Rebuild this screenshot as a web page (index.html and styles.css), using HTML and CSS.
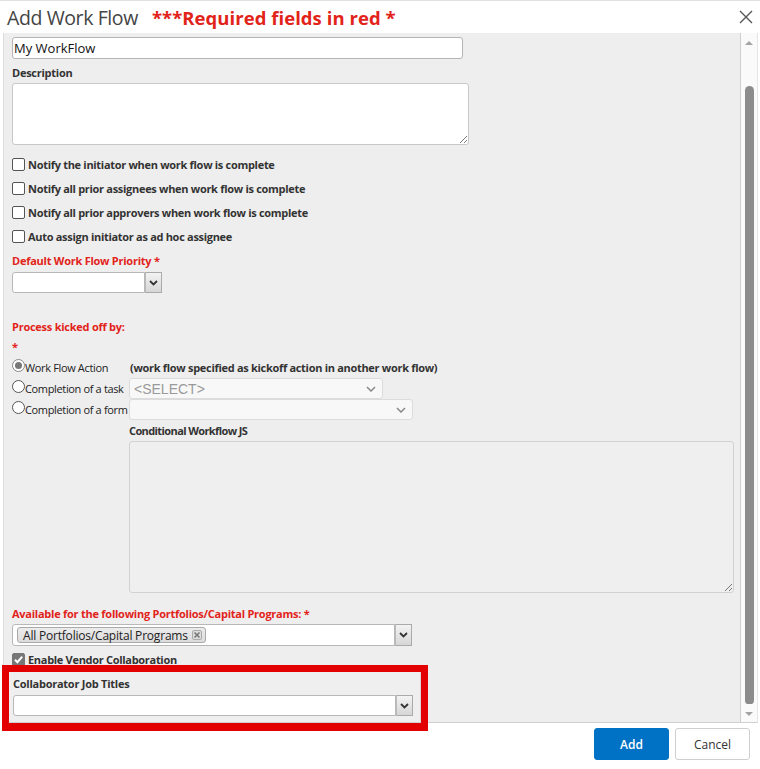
FILE: index.html
```html
<!DOCTYPE html>
<html>
<head>
<meta charset="utf-8">
<link rel="stylesheet" href="styles.css">
</head>
<body>
<div class="dialog">
  <header class="titlebar">
    <h1 class="title">Add Work Flow</h1>
    <span class="req-note">***Required fields in red *</span>
    <button class="close" aria-label="Close">
      <svg width="14" height="14" viewBox="0 0 14 14"><path d="M1 1L13 13M13 1L1 13" stroke="#555" stroke-width="1.4" fill="none"/></svg>
    </button>
  </header>

  <div class="body">
    <div class="form">
      <input class="text-input name-input" type="text" value="My WorkFlow">

      <div class="label top-label">Description</div>
      <div class="textarea desc"><span class="grip"></span></div>

      <label class="check-row"><span class="cbox"></span>Notify the initiator when work flow is complete</label>
      <label class="check-row"><span class="cbox"></span>Notify all prior assignees when work flow is complete</label>
      <label class="check-row"><span class="cbox"></span>Notify all prior approvers when work flow is complete</label>
      <label class="check-row"><span class="cbox"></span>Auto assign initiator as ad hoc assignee</label>

      <div class="label red prio-label">Default Work Flow Priority *</div>
      <div class="combo prio-combo">
        <div class="combo-field"></div>
        <div class="combo-btn"><svg width="9" height="6" viewBox="0 0 9 6"><path d="M1 1L4.5 4.5L8 1" stroke="#333" stroke-width="1.8" fill="none"/></svg></div>
      </div>

      <div class="label red process-label">Process kicked off by:</div>
      <div class="label red star-label">*</div>

      <div class="radio-row">
        <span class="radio checked"></span><span class="radio-text">Work Flow Action</span>
        <span class="note">(work flow specified as kickoff action in another work flow)</span>
      </div>
      <div class="radio-row">
        <span class="radio"></span><span class="radio-text">Completion of a task</span>
        <div class="dsel task-sel"><span class="placeholder">&lt;SELECT&gt;</span><svg width="10" height="6" viewBox="0 0 10 6"><path d="M1 1L5 5L9 1" stroke="#888" stroke-width="1.5" fill="none"/></svg></div>
      </div>
      <div class="radio-row">
        <span class="radio"></span><span class="radio-text">Completion of a form</span>
        <div class="dsel form-sel"><span class="placeholder"></span><svg width="10" height="6" viewBox="0 0 10 6"><path d="M1 1L5 5L9 1" stroke="#888" stroke-width="1.5" fill="none"/></svg></div>
      </div>

      <div class="js-block">
        <div class="label js-label">Conditional Workflow JS</div>
        <div class="textarea js-area"><span class="grip"></span></div>
      </div>

      <div class="label red avail-label">Available for the following Portfolios/Capital Programs: *</div>
      <div class="combo multi-combo">
        <div class="combo-field multi-field">
          <span class="chip">All Portfolios/Capital Programs <span class="chip-x"><svg width="8" height="8" viewBox="0 0 8 8"><path d="M1.5 1.5L6.5 6.5M6.5 1.5L1.5 6.5" stroke="#777" stroke-width="1.6"/></svg></span></span>
        </div>
        <div class="combo-btn"><svg width="9" height="6" viewBox="0 0 9 6"><path d="M1 1L4.5 4.5L8 1" stroke="#333" stroke-width="1.8" fill="none"/></svg></div>
      </div>

      <label class="check-row vendor-row"><span class="cbox checked"><svg width="11" height="11" viewBox="0 0 11 11"><path d="M2 5.8L4.4 8.2L9.2 2.6" stroke="#fff" stroke-width="2" fill="none"/></svg></span>Enable Vendor Collaboration</label>

      <div class="collab">
        <div class="label collab-label">Collaborator Job Titles</div>
        <div class="combo collab-combo">
          <div class="combo-field"></div>
          <div class="combo-btn"><svg width="9" height="6" viewBox="0 0 9 6"><path d="M1 1L4.5 4.5L8 1" stroke="#333" stroke-width="1.8" fill="none"/></svg></div>
        </div>
      </div>
    </div>

    <div class="scrollbar">
      <span class="arrow up"></span>
      <div class="thumb"></div>
      <span class="arrow down"></span>
    </div>
  </div>

  <footer class="footer">
    <button class="btn primary">Add</button>
    <button class="btn">Cancel</button>
  </footer>

  <div class="highlight"></div>
</div>
</body>
</html>
```

FILE: styles.css
```css
* { box-sizing: border-box; }
html, body { margin: 0; padding: 0; background: #fff; }
body { font-family: "Open Sans", "Noto Sans", sans-serif; color: #333; }

.dialog {
  position: relative;
  width: 760px;
  height: 769px;
  background: #fff;
  border-top: 1px solid #e2e2e2;
  display: flex;
  flex-direction: column;
  overflow: hidden;
}

.titlebar {
  height: 32px;
  display: flex;
  align-items: center;
  padding-left: 7px;
  flex: none;
}
.title {
  margin: 0;
  font-size: 19.5px;
  font-weight: 400;
  color: #444;
  letter-spacing: -0.4px;
}
.req-note {
  margin-left: 14px;
  font-size: 18.5px;
  font-weight: 700;
  color: #e2231a;
  letter-spacing: 0.05px;
}
.close {
  margin-left: auto;
  margin-right: 6px;
  border: 0;
  background: none;
  padding: 0;
  width: 16px;
  height: 16px;
  display: flex;
  align-items: center;
  justify-content: center;
}

.body {
  height: 690px;
  flex: none;
  display: flex;
  margin: 0 2px 0 3px;
  border-left: 1px solid #dcdcdc;
  border-bottom: 1px solid #d0d0d0;
  border-right: 1px solid #e6e6e6;
}
.form {
  flex: 1;
  background: #eeeeee;
  padding: 4px 0 0 8px;
  overflow: hidden;
  border-right: 1px solid #cfcfcf;
}

.label {
  font-size: 11px;
  font-weight: 700;
  line-height: 16px;
  height: 16px;
  color: #333;
  letter-spacing: -0.25px;
}
.red { color: #e2231a; }

.text-input {
  display: block;
  width: 451px;
  height: 22px;
  border: 1px solid #b5b5b5;
  border-radius: 3px;
  background: #fff;
  font-family: "Open Sans", sans-serif;
  font-size: 13px;
  color: #111;
  padding: 0 1px;
  margin: 0;
  outline: none;
}
.top-label { margin-top: 6px; }

.textarea {
  position: relative;
  background: #fff;
  border: 1px solid #c8c8c8;
  border-radius: 3px;
}
.desc { width: 457px; height: 62px; margin-top: 2px; }
.grip {
  position: absolute;
  right: 1px;
  bottom: 1px;
  width: 7px;
  height: 7px;
  background: linear-gradient(135deg, transparent 45%, #777 45%, #777 55%, transparent 55%, transparent 75%, #777 75%, #777 85%, transparent 85%);
}

.check-row {
  display: flex;
  align-items: center;
  height: 24px;
  font-size: 11px;
  font-weight: 700;
  letter-spacing: -0.3px;
  color: #333;
}
.desc + .check-row { margin-top: 7px; }
.cbox {
  width: 13px;
  height: 13px;
  border: 1px solid #555;
  border-radius: 2px;
  background: #fff;
  margin-right: 3px;
  flex: none;
  display: flex;
  align-items: center;
  justify-content: center;
}
.cbox.checked { background: #777; border-color: #777; }

.prio-label { margin-top: 5px; }

.combo { display: flex; }
.combo-field {
  height: 21px;
  background: #fff;
  border: 1px solid #b8b8b8;
  border-radius: 3px 0 0 3px;
}
.combo-btn {
  width: 17px;
  height: 21px;
  border: 1px solid #aaa;
  border-left: 1px solid #bbb;
  background: linear-gradient(#f3f3f3, #d6d6d6);
  display: flex;
  align-items: center;
  justify-content: center;
}
.prio-combo { margin-top: 3px; }
.prio-combo .combo-field { width: 133px; }

.process-label { margin-top: 26px; }
.star-label { margin-top: 4px; }

.radio-row {
  display: flex;
  align-items: center;
  height: 21px;
  font-size: 11px;
  color: #222;
}
.star-label + .radio-row { margin-top: 2px; }
.radio {
  width: 13px;
  height: 13px;
  border: 1px solid #555;
  border-radius: 50%;
  background: #fff;
  flex: none;
  position: relative;
  margin-top: -4px;
}
.radio.checked { border-color: #888; }
.radio.checked::after {
  content: "";
  position: absolute;
  left: 2px;
  top: 2px;
  width: 7px;
  height: 7px;
  border-radius: 50%;
  background: #777;
}
.radio-text {
  width: 104px;
  flex: none;
  letter-spacing: -0.35px;
  white-space: nowrap;
}
.note {
  margin-left: 1px;
  font-size: 11px;
  font-weight: 700;
  letter-spacing: -0.3px;
  color: #333;
}
.dsel {
  height: 21px;
  border: 1px solid #dcdcdc;
  border-radius: 3px;
  background: #f8f8f8;
  display: flex;
  align-items: center;
  justify-content: space-between;
  padding: 0 6px 0 4px;
}
.task-sel { width: 254px; }
.form-sel { width: 284px; }
.placeholder {
  font-family: "Liberation Sans", Arial, sans-serif;
  font-size: 14px;
  color: #9a9a9a;
}

.js-block { margin-left: 117px; }
.js-label { margin-top: 3px; letter-spacing: -0.6px; }
.js-area {
  width: 605px;
  height: 152px;
  margin-top: 2px;
  background: #efefef;
  border-color: #d2d2d2;
}

.avail-label { margin-top: 13px; }
.multi-combo { margin-top: 2px; }
.multi-field {
  width: 383px;
  height: 22px;
  display: flex;
  align-items: center;
  padding-left: 4px;
}
.multi-combo .combo-btn { height: 22px; }
.chip {
  display: inline-flex;
  align-items: center;
  height: 16px;
  padding: 0 3px 0 5px;
  background: linear-gradient(#ececec, #dcdcdc);
  border: 1px solid #aaa;
  border-radius: 3px;
  font-size: 12px;
  color: #222;
  letter-spacing: -0.2px;
  white-space: nowrap;
}
.chip-x {
  margin-left: 4px;
  width: 10px;
  height: 10px;
  border: 1px solid #aaa;
  border-radius: 2px;
  background: #ddd;
  display: inline-flex;
  align-items: center;
  justify-content: center;
}

.vendor-row { margin-top: 1px; }

.collab {
  width: 413px;
  margin-left: -4px;
  padding: 4px 0 0 4px;
  height: 60px;
  border: 1px solid #d4d4d4;
  background: #efefef;
}
.collab-combo { margin-top: 3px; }
.collab-combo .combo-field { width: 383px; }

.scrollbar {
  width: 16px;
  flex: none;
  background: #fafafa;
  display: flex;
  flex-direction: column;
  align-items: center;
  padding: 8px 0 6px;
}
.arrow {
  width: 0;
  height: 0;
  border-left: 4px solid transparent;
  border-right: 4px solid transparent;
}
.arrow.up { border-bottom: 4px solid #a3a3a3; }
.arrow.down { border-top: 4px solid #a3a3a3; }
.thumb {
  width: 9px;
  flex: 1;
  margin: 41px 0 8px;
  background: #8c8c8c;
  border-radius: 5px 5px 4px 4px;
}

.footer {
  flex: 1;
  display: flex;
  justify-content: flex-end;
  align-items: flex-start;
  gap: 6px;
  padding: 5px 10px 0 0;
}
.btn {
  width: 75px;
  height: 32px;
  border: 1px solid #cfcfcf;
  border-radius: 3px;
  background: #fff;
  font-family: "Open Sans", sans-serif;
  font-size: 12px;
  color: #333;
  padding: 0;
}
.btn.primary {
  background: #0072c6;
  border-color: #0072c6;
  color: #fff;
  font-weight: 600;
}

.highlight {
  position: absolute;
  left: 2px;
  top: 664px;
  width: 426px;
  height: 66px;
  border: 7px solid #e20000;
  border-bottom-width: 8px;
  pointer-events: none;
}
```
